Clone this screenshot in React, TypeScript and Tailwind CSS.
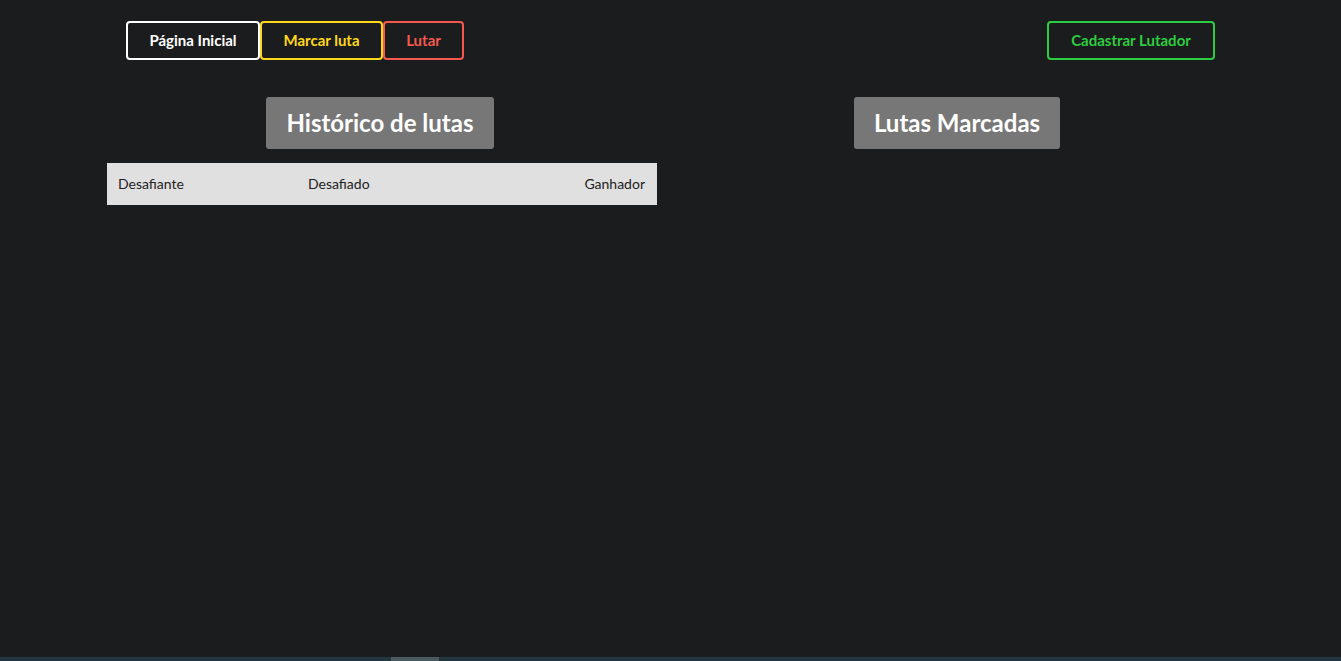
const NavButton = ({ label, classes }: { label: string; classes: string }) => {
  return (
    <button
      className={`${classes} h-[39px] rounded-[4px] border-2 bg-transparent text-center text-[15px] font-bold`}
    >
      {label}
    </button>
  );
};

const Heading = ({ title }: { title: string }) => {
  return (
    <div className="flex justify-center">
      <h1 className="rounded-[3px] bg-[#777777] px-[20px] py-[8px] text-[24px] leading-[36px] font-bold text-white">
        {title}
      </h1>
    </div>
  );
};

export default function App() {
  return (
    <div
      className="relative flex h-[661px] w-full flex-col bg-[#1b1c1e]"
      style={{ fontFamily: "Lato, 'Noto Sans', sans-serif" }}
    >
      <nav className="flex items-center justify-between px-[126px] pt-[21px]">
        <div className="flex">
          <NavButton label="Página Inicial" classes="w-[134px] border-white text-white" />
          <NavButton label="Marcar luta" classes="w-[123px] border-[#ffd81c] text-[#ffd81c]" />
          <NavButton label="Lutar" classes="w-[81px] border-[#f5584f] text-[#f5584f]" />
        </div>
        <NavButton label="Cadastrar Lutador" classes="w-[168px] border-[#2ecc40] text-[#2ecc40]" />
      </nav>

      <main className="flex flex-1 gap-[25px] pt-[37px] pl-[107px]">
        <section className="flex w-[550px] flex-col gap-[14px]">
          <div className="pr-[4px]">
            <Heading title="Histórico de lutas" />
          </div>
          <div className="grid h-[42px] grid-cols-[190px_190px_1fr] items-center bg-[#e0e0e0] pb-[1px] text-[14px] text-[#222222]">
            <span className="px-[11px]">Desafiante</span>
            <span className="px-[11px]">Desafiado</span>
            <span className="pr-[12px] pl-[11px] text-right">Ganhador</span>
          </div>
        </section>
        <section className="flex w-[550px] flex-col">
          <Heading title="Lutas Marcadas" />
        </section>
      </main>

      <div className="flex h-[4px] bg-[#22363f]">
        <div className="w-[391px]" />
        <div className="w-[48px] bg-[#4b5a60]" />
      </div>
    </div>
  );
}
